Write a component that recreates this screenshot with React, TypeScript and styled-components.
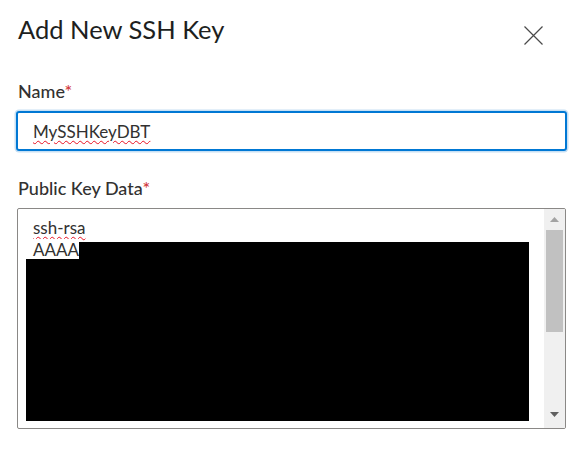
import React from "react";
import styled, { createGlobalStyle } from "styled-components";

const GlobalStyle = createGlobalStyle`
  html, body {
    margin: 0;
    padding: 0;
    background: #ffffff;
  }
  body {
    font-family: Lato, "Open Sans", "Liberation Sans", sans-serif;
    color: #323130;
  }
`;

const Panel = styled.div`
  width: 583px;
  height: 450px;
  box-sizing: border-box;
  padding: 13px 16px 0 16px;
  display: flex;
  flex-direction: column;
  overflow: hidden;
`;

const Header = styled.div`
  display: flex;
  justify-content: space-between;
  align-items: flex-start;
  padding-left: 2px;
  margin-bottom: 34px;
`;

const Title = styled.h1`
  margin: 0;
  font-size: 25.5px;
  font-weight: 400;
  line-height: 32px;
  color: #201f1e;
`;

const CloseButton = styled.button`
  border: none;
  background: transparent;
  padding: 0;
  margin: 13px 24px 0 0;
  width: 19px;
  height: 19px;
  cursor: pointer;
  display: flex;
`;

const Field = styled.div`
  display: flex;
  flex-direction: column;
  margin-bottom: 25px;
`;

const Label = styled.label`
  font-size: 18px;
  font-weight: 500;
  line-height: 24px;
  color: #323130;
  padding-left: 2px;
  margin-bottom: 8px;
`;

const Required = styled.span`
  color: #d13438;
`;

const TextInput = styled.div`
  height: 40px;
  box-sizing: border-box;
  border: 2px solid #0078d4;
  border-radius: 3px;
  box-shadow: 0 0 0 1.5px #c7e0f4;
  padding: 0 15px;
  display: flex;
  align-items: center;
  font-size: 17px;
  color: #323130;
`;

const Spelled = styled.span`
  align-self: flex-start;
  text-decoration: underline wavy #e81123;
  text-decoration-thickness: 1px;
  text-underline-offset: 2px;
`;

const InputValue = styled(Spelled)`
  align-self: center;
`;

const TextArea = styled.div`
  position: relative;
  height: 221px;
  box-sizing: border-box;
  margin-left: 1px;
  margin-right: 1px;
  border: 1px solid #8a8886;
  border-radius: 2px;
  display: flex;
  overflow: hidden;
`;

const AreaText = styled.div`
  flex: 1;
  padding: 8px 0 0 15px;
  font-size: 17px;
  line-height: 22px;
  color: #323130;
  display: flex;
  flex-direction: column;
`;

const Highlight = styled.span`
  background: #ffffff;
  align-self: flex-start;
`;

const Redaction = styled.div`
  position: absolute;
  background: #000000;
`;

const Scrollbar = styled.div`
  width: 21px;
  background: #f0f0f0;
  display: flex;
  flex-direction: column;
  padding-bottom: 3px;
`;

const Arrow = styled.div`
  height: 21px;
  display: flex;
  align-items: center;
  justify-content: center;
`;

const Track = styled.div`
  flex: 1;
  display: flex;
  flex-direction: column;
`;

const Thumb = styled.div`
  height: 102px;
  margin: 0 2px;
  background: #c1c1c1;
`;

export default function App() {
  return (
    <>
      <GlobalStyle />
      <Panel>
        <Header>
          <Title>Add New SSH Key</Title>
          <CloseButton aria-label="Close">
            <svg width="19" height="19" viewBox="0 0 19 19">
              <path
                d="M0.5 0.5 L18.5 18.5 M18.5 0.5 L0.5 18.5"
                stroke="#4a4a4a"
                strokeWidth="1.2"
                fill="none"
              />
            </svg>
          </CloseButton>
        </Header>

        <Field>
          <Label>
            Name<Required>*</Required>
          </Label>
          <TextInput>
            <InputValue>MySSHKeyDBT</InputValue>
          </TextInput>
        </Field>

        <Field>
          <Label>
            Public Key Data<Required>*</Required>
          </Label>
          <TextArea>
            <AreaText>
              <Spelled>ssh-rsa</Spelled>
              <Highlight>AAAA</Highlight>
            </AreaText>
            <Redaction style={{ left: 61, top: 33, width: 450, height: 17 }} />
            <Redaction style={{ left: 8, top: 50, width: 503, height: 162 }} />
            <Scrollbar>
              <Arrow>
                <svg width="9" height="5" viewBox="0 0 9 5">
                  <path d="M0 5 L4.5 0 L9 5 Z" fill="#a3a3a3" />
                </svg>
              </Arrow>
              <Track>
                <Thumb />
              </Track>
              <Arrow>
                <svg width="9" height="5" viewBox="0 0 9 5">
                  <path d="M0 0 L4.5 5 L9 0 Z" fill="#606060" />
                </svg>
              </Arrow>
            </Scrollbar>
          </TextArea>
        </Field>
      </Panel>
    </>
  );
}
